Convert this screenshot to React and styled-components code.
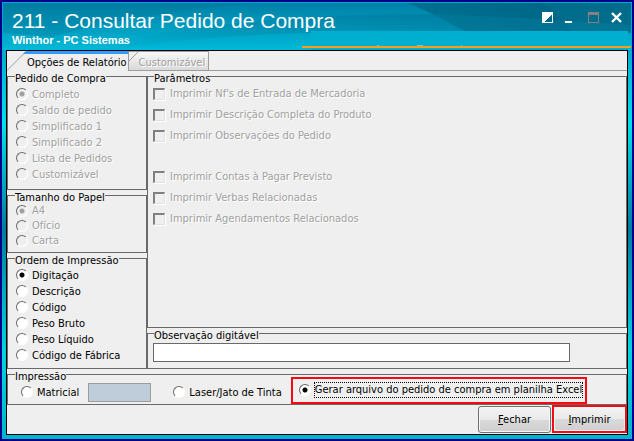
import { useState } from "react"
import styled, { createGlobalStyle, css } from "styled-components"


//Styled Components
const GlobalStyle = createGlobalStyle`
  * {
    box-sizing: border-box;
  }
  body {
    margin: 0;
    font-family: "DejaVu Sans Condensed", "Noto Sans", sans-serif;
    font-size: 11px;
    color: #000;
  }
`

const Frame = styled.div`
  min-height: 100vh;
  display: flex;
  flex-direction: column;
  background: linear-gradient(#007fa3, #00b8d4 15%, #00e0ea 28%, #007d9c 52%, #00d4e0 80%, #00b4cc);
  border: 2px solid #00008b;
`

const Header = styled.header`
  position: relative;
  height: 48px;
  display: flex;
  justify-content: space-between;
  border: solid #00a9cb;
  border-width: 1px 1px 0;
`

const Backdrop = styled.svg`
  position: absolute;
  top: 0;
  left: 0;
  width: 100%;
  height: 100%;
`

const Heading = styled.div`
  position: relative;
  padding: 6px 0 0 9px;
  color: white;
  font-family: "Liberation Sans", Arial, sans-serif;
`

const Title = styled.h1`
  margin: 0;
  font-size: 21px;
  font-weight: 400;
  line-height: 24px;
`

const Subtitle = styled.p`
  margin: 0;
  font-size: 11px;
  font-weight: 700;
  line-height: 14px;
`

const WindowButtons = styled.div`
  position: relative;
  display: flex;
  gap: 11px;
  padding: 7px 8px 0 0;
`

const WindowButton = styled.button`
  width: 12px;
  height: 14px;
  padding: 0;
  border: none;
  background: none;

  svg {
    display: block;
  }
`

const Content = styled.main`
  flex: 1;
  display: flex;
  flex-direction: column;
  margin: 0 4px 4px;
  background: #efefef;
  border: 1px solid #000;
`

const TabStrip = styled.div`
  display: flex;
  height: 20px;
`

const Tab = styled.button`
  display: flex;
  align-items: flex-start;
  padding: 0;
  border: none;
  background: none;
  font: inherit;
  white-space: nowrap;
  ${({ $active }) => !$active && css`
    border: solid #9d9d9d;
    border-width: 1px 1px 1px 0;
    background: linear-gradient(#f8f8f8, #d9d9d9);
    color: #a0a0a0;
    text-shadow: 1px 1px #fff;
  `}
`

const TabText = styled.span`
  padding: 0 3px 0 1px;
  line-height: 22px;
  ${({ $active }) => $active && css`
    height: 20px;
    padding: 0 1px;
    border-top: 3px solid #3399ff;
    border-right: 1px solid #9d9d9d;
    line-height: 18px;
  `}
`

const StripRest = styled.div`
  flex: 1;
  border-bottom: 1px solid #9d9d9d;
`

const Columns = styled.div`
  display: grid;
  grid-template-columns: 140px 1fr;
`

const Column = styled.div`
  display: flex;
  flex-direction: column;
`

const Group = styled.fieldset`
  margin: 0;
  padding: ${({ $pad }) => $pad || "5px 8px"};
  border: 1px solid #696969;
  min-width: 0;
  flex: ${({ $grow }) => ($grow ? 1 : "none")};
`

const Legend = styled.legend`
  height: 11px;
  margin-left: ${({ $indent }) => $indent || -1}px;
  padding: 0;
  line-height: 16px;
  white-space: nowrap;
`

const Option = styled.label`
  display: flex;
  align-items: center;
  gap: ${({ $gap }) => $gap || 4}px;
  height: ${({ $height }) => $height || 16}px;
  white-space: nowrap;
  ${({ $disabled }) => $disabled && css`
    color: #a0a0a0;
    text-shadow: 1px 1px #fff;
  `}
`

const Radio = styled.input.attrs({ type: "radio" })`
  appearance: none;
  flex: none;
  width: 12px;
  height: 12px;
  margin: 0;
  border: 1px solid;
  border-color: #696969 #fff #fff #696969;
  border-radius: 50%;
  background: #fff;

  &:checked {
    background: radial-gradient(circle, #000 2px, #fff 3px);
  }
  &:disabled {
    background: #efefef;
  }
  &:disabled:checked {
    background: radial-gradient(circle, #a0a0a0 2px, #efefef 3px);
  }
`

const Check = styled.input.attrs({ type: "checkbox" })`
  appearance: none;
  flex: none;
  width: 12px;
  height: 12px;
  margin: 0;
  border: solid;
  border-width: 2px 1px 1px 2px;
  border-color: #808080 #e0e0e0 #e0e0e0 #808080;
  box-shadow: 1px 1px #fff;
`

const CheckList = styled.div`
  padding-bottom: ${({ $gap }) => $gap || 0}px;
`

const NoteInput = styled.input`
  display: block;
  width: 89%;
  height: 19px;
  border: 1px solid #696969;
  background: #fff;
  font: inherit;
`

const PrintRow = styled.div`
  display: flex;
  align-items: center;
  height: 24px;
  padding-left: 5px;
`

const PrinterPort = styled.input`
  width: 63px;
  height: 19px;
  margin: 0 22px 0 9px;
  border: 1px solid #9d9d9d;
  background: #bfcddb;
`

const Highlight = styled.div`
  border: 2px solid #f50a14;
`

const ExcelHighlight = styled(Highlight)`
  margin: -4px 0 0 9px;
  padding: 3px 3px 4px 6px;
`

const Focused = styled.span`
  outline: 1px dotted #000;
  line-height: 14px;
`

const Footer = styled.footer`
  display: flex;
  justify-content: flex-end;
  gap: 1px;
`

const Button = styled.button`
  width: 73px;
  height: 27px;
  margin-top: 1px;
  padding: 0;
  border: 1px solid #707070;
  border-radius: 3px;
  background: linear-gradient(#f3f3f3, #e9e9e9 50%, #dadada 50%, #cfcfcf);
  box-shadow: inset 0 0 0 1px #f6f6f6;
  font: inherit;
  ${({ $flat }) => $flat && css`
    display: block;
    width: 71px;
    height: 24px;
    margin: 0;
    border: none;
  `}
`


const reportTypes = ["Completo", "Saldo de pedido", "Simplificado 1", "Simplificado 2", "Lista de Pedidos", "Customizável"]
const paperSizes = ["A4", "Ofício", "Carta"]
const printOrders = ["Digitação", "Descrição", "Código", "Peso Bruto", "Peso Líquido", "Código de Fábrica"]
const documentChecks = ["Imprimir Nf's de Entrada de Mercadoria", "Imprimir Descrição Completa do Produto", "Imprimir Observações do Pedido"]
const relatedChecks = ["Imprimir Contas à Pagar Previsto", "Imprimir Verbas Relacionadas", "Imprimir Agendamentos Relacionados"]


function RadioGroup({ title, name, options, disabled, height, pad }) {
  const [value, setValue] = useState(options[0])

  return (
    <Group $pad={pad}>
      <Legend>{title}</Legend>
      {options.map((option) => (
        <Option key={option} $disabled={disabled} $height={height}>
          <Radio
            name={name}
            disabled={disabled}
            checked={value === option}
            onChange={() => setValue(option)}
          />
          {option}
        </Option>
      ))}
    </Group>
  )
}

function CheckGroup({ labels, gap }) {
  return (
    <CheckList $gap={gap}>
      {labels.map((label) => (
        <Option key={label} $disabled $height={21} $gap={5}>
          <Check disabled />
          {label}
        </Option>
      ))}
    </CheckList>
  )
}

function HeaderBackdrop() {
  return (
    <Backdrop viewBox="0 0 628 47" preserveAspectRatio="none" aria-hidden="true">
      <defs>
        <linearGradient id="sky" x1="0" y1="0" x2="0" y2="1">
          <stop offset="0" stopColor="#007fa6" />
          <stop offset="1" stopColor="#00b9d8" />
        </linearGradient>
        <linearGradient id="shade" x1="0" y1="0" x2="1" y2="0">
          <stop offset="0" stopColor="#006a8c" stopOpacity="0" />
          <stop offset="1" stopColor="#006a8c" stopOpacity="0.6" />
        </linearGradient>
        <linearGradient id="corner" x1="0" y1="0" x2="1" y2="0">
          <stop offset="0" stopColor="#006a8a" />
          <stop offset="1" stopColor="#005878" />
        </linearGradient>
      </defs>
      <rect width="628" height="47" fill="url(#sky)" />
      <path d="M0 0H260C180 6 110 16 50 34L0 30Z" fill="#00789c" opacity="0.35" />
      <path d="M80 47C170 22 300 10 430 11L628 18V30H300C220 32 150 40 110 47Z" fill="url(#shade)" />
      <path d="M405 0H628V29H464C446 20 425 8 405 0Z" fill="url(#corner)" opacity="0.8" />
      <path d="M540 0H628V29H568C562 18 552 8 540 0Z" fill="#00718f" opacity="0.7" />
      <path d="M300 12C400 8 500 13 628 22V29H464L430 12Z" fill="#0090b0" opacity="0.3" />
      <path d="M308 28H625V47H308Z" fill="#00aed0" />
      <path d="M299 43H628V45H299Z" fill="#ff9c1c" />
      <path d="M374 42H376V43H374ZM414 42H420V43H414ZM458 42H459V43H458Z" fill="#7fc6c0" />
    </Backdrop>
  )
}

function App() {
  const [output, setOutput] = useState("excel")

  return (
    <Frame>
      <GlobalStyle />
      <Header>
        <HeaderBackdrop />
        <Heading>
          <Title>211 - Consultar Pedido de Compra</Title>
          <Subtitle>Winthor - PC Sistemas</Subtitle>
        </Heading>
        <WindowButtons>
          <WindowButton aria-label="Tema">
            <svg width="12" height="12" shapeRendering="crispEdges">
              <path d="M0 1H11V12H0Z" fill="#fff" />
              <path d="M10 3V11H2Z" fill="#00688a" />
            </svg>
          </WindowButton>
          <WindowButton aria-label="Minimizar">
            <svg width="12" height="12">
              <path d="M0 10H7V12H0Z" fill="#fff" />
            </svg>
          </WindowButton>
          <WindowButton aria-label="Maximizar" disabled>
            <svg width="12" height="12">
              <path d="M0 1H11V12H0ZM1 4V11H10V4Z" fill="#888080" fillRule="evenodd" />
            </svg>
          </WindowButton>
          <WindowButton aria-label="Fechar janela">
            <svg width="12" height="12">
              <path d="M1 2L10 11M10 2L1 11" stroke="#fff" strokeWidth="2.4" />
            </svg>
          </WindowButton>
        </WindowButtons>
      </Header>

      <Content>
        <TabStrip>
          <Tab $active>
            <svg width="19" height="20">
              <path d="M0 19.5L19 0.5" stroke="#9d9d9d" fill="none" />
              <path d="M19 0V3H16Z" fill="#3399ff" />
            </svg>
            <TabText $active>Opções de Relatório</TabText>
          </Tab>
          <Tab>
            <svg width="9" height="10">
              <path d="M0 -1H9L0 9Z" fill="#efefef" />
              <path d="M0 9L9 0" stroke="#9d9d9d" fill="none" />
            </svg>
            <TabText>Customizável</TabText>
          </Tab>
          <StripRest />
        </TabStrip>

        <Columns>
          <Column>
            <RadioGroup title="Pedido de Compra" name="tipo" options={reportTypes} disabled pad="4px 8px 7px" />
            <RadioGroup title="Tamanho do Papel" name="papel" options={paperSizes} disabled height={15} pad="2px 8px 4px" />
            <RadioGroup title="Ordem de Impressão" name="ordem" options={printOrders} pad="3px 8px 5px" />
          </Column>
          <Column>
            <Group $pad="1px 5px" $grow>
              <Legend $indent={1}>Parâmetros</Legend>
              <CheckGroup labels={documentChecks} gap={20} />
              <CheckGroup labels={relatedChecks} />
            </Group>
            <Group $pad="4px 5px 6px">
              <Legend $indent={1}>Observação digitável</Legend>
              <NoteInput type="text" aria-label="Observação digitável" />
            </Group>
          </Column>
        </Columns>

        <Group $pad="0 8px">
          <Legend>Impressão</Legend>
          <PrintRow>
            <Option>
              <Radio name="saida" checked={output === "matricial"} onChange={() => setOutput("matricial")} />
              Matricial
            </Option>
            <PrinterPort type="text" aria-label="Porta da impressora" disabled />
            <Option>
              <Radio name="saida" checked={output === "laser"} onChange={() => setOutput("laser")} />
              Laser/Jato de Tinta
            </Option>
            <ExcelHighlight>
              <Option>
                <Radio name="saida" checked={output === "excel"} onChange={() => setOutput("excel")} />
                <Focused>Gerar arquivo do pedido de compra em planilha Excel</Focused>
              </Option>
            </ExcelHighlight>
          </PrintRow>
        </Group>

        <Footer>
          <Button><u>F</u>echar</Button>
          <Highlight>
            <Button $flat><u>I</u>mprimir</Button>
          </Highlight>
        </Footer>
      </Content>
    </Frame>
  )
}

export default App
